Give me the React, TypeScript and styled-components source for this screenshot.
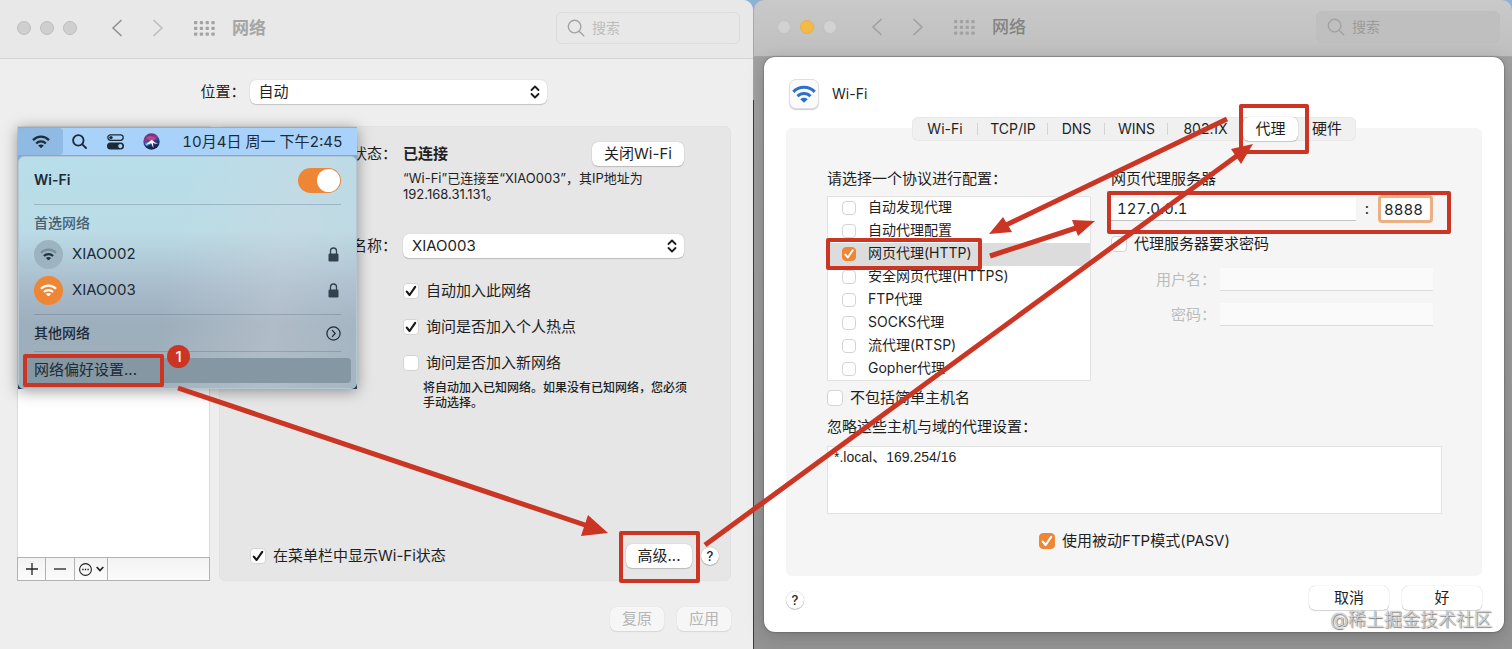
import React, { useId } from "react";
import styled, { createGlobalStyle, css } from "styled-components";

const RED = "#cb3523";
const ORANGE = "#ee8636";

const GlobalStyle = createGlobalStyle`
  *, *::before, *::after { box-sizing: border-box; }
  body {
    margin: 0;
    color: #1f1f1f;
    font-family: Inter, "Noto Sans CJK SC", sans-serif;
    font-size: 15px;
    line-height: 24px;
  }
  button, input, select, textarea { font: inherit; color: inherit; margin: 0; }
`;

/* ---------- shared parts ---------- */

const Desktop = styled.main`
  position: relative;
  display: grid;
  grid-template-columns: minmax(0, 753fr) minmax(0, 758fr);
  column-gap: 1px;
  min-height: 100vh;
  overflow: hidden;
  background: linear-gradient(#8db2d8 0, #8fa6bd 100px, #3b3b3b 100px);
`;

const Window = styled.section<{ $dim?: boolean }>`
  display: flex;
  flex-direction: column;
  position: relative;
  border-radius: ${(p) => (p.$dim ? "10px 10px 0 0" : "0 10px 0 0")};
  background: ${(p) => (p.$dim ? "linear-gradient(#a2a2a2, #939393)" : "#eeeeee")};
`;

const Toolbar = styled.header<{ $dim?: boolean }>`
  display: flex;
  align-items: center;
  height: ${(p) => (p.$dim ? 57 : 59)}px;
  padding: ${(p) => (p.$dim ? "0 12px 2px 23px" : "0 13px 2px 17px")};
  border-bottom: 1px solid ${(p) => (p.$dim ? "#a6a6a6" : "#d2d2d2")};
  border-radius: inherit;
  background: ${(p) => (p.$dim ? "linear-gradient(#c9c9c9, #bfbfbf)" : "#e8e8e8")};
  color: ${(p) => (p.$dim ? "#a2a2a2" : "#a3a3a3")};
`;

const Lights = styled.div`
  display: flex;
  gap: 9px;
`;

const Light = styled.button<{ $fill: string; $edge: string }>`
  width: 14px;
  height: 14px;
  padding: 0;
  border: 1px solid ${(p) => p.$edge};
  border-radius: 50%;
  background: ${(p) => p.$fill};
`;

const NavGroup = styled.nav`
  display: flex;
  align-items: center;
  gap: 31px;
  margin-left: 35px;
`;

const IconButton = styled.button`
  display: flex;
  padding: 0;
  border: 0;
  background: none;
`;

const Title = styled.h1<{ $dim?: boolean }>`
  margin: 0 auto 0 17px;
  color: ${(p) => (p.$dim ? "#838383" : "#a5a5a5")};
  font-size: 17px;
  font-weight: ${(p) => (p.$dim ? 500 : 600)};
`;

const Search = styled.label<{ $dim?: boolean }>`
  display: flex;
  align-items: center;
  gap: 7px;
  width: 184px;
  height: 32px;
  padding: 0 10px;
  border: 1px solid ${(p) => (p.$dim ? "#bebebe" : "#dcdcdc")};
  border-radius: 6px;
  background: ${(p) => (p.$dim ? "#bfbfbf" : "#e8e8e8")};
  input {
    flex: 1;
    min-width: 0;
    padding: 0;
    border: 0;
    outline: 0;
    background: none;
    font-size: 14px;
  }
  input::placeholder {
    color: ${(p) => (p.$dim ? "#9b9b9b" : "#bdbdbd")};
    opacity: 1;
  }
`;

const PushButton = styled.button<{ $width: number }>`
  width: ${(p) => p.$width}px;
  height: 24px;
  padding: 0;
  border: 0;
  border-radius: 6px;
  background: #fff;
  box-shadow: 0 0 1px rgba(0, 0, 0, 0.3), 0 1px 1px rgba(0, 0, 0, 0.16);
  line-height: 24px;
  white-space: nowrap;
  &:disabled {
    background: #f6f6f6;
    color: #b5b5b5;
    box-shadow: 0 0 1px rgba(0, 0, 0, 0.16), 0 1px 1px rgba(0, 0, 0, 0.08);
  }
`;

const HelpButton = styled.button`
  width: 18px;
  height: 18px;
  padding: 0;
  border: 0;
  border-radius: 50%;
  background: #fff;
  box-shadow: 0 0 1px rgba(0, 0, 0, 0.35), 0 1px 1px rgba(0, 0, 0, 0.2);
  font-size: 13px;
  font-weight: 500;
  line-height: 18px;
`;

const SelectWrap = styled.span<{ $width?: number }>`
  position: relative;
  display: block;
  width: ${(p) => (p.$width ? p.$width + "px" : "100%")};
  select {
    display: block;
    appearance: none;
    width: 100%;
    height: 24px;
    padding: 0 24px 0 9px;
    border: 0;
    border-radius: 6px;
    background: #fff;
    box-shadow: 0 0 1px rgba(0, 0, 0, 0.25), 0 1px 1px rgba(0, 0, 0, 0.16);
    line-height: 24px;
  }
  svg {
    position: absolute;
    top: 5px;
    right: 7px;
    pointer-events: none;
  }
`;

/* Red outline drawn round the control that a step points to. */
const Mark = styled.span<{ $inset: string }>`
  position: relative;
  display: flex;
  &::after {
    content: "";
    position: absolute;
    inset: ${(p) => p.$inset};
    z-index: 3;
    border: 4px solid ${RED};
    border-radius: 2px;
    pointer-events: none;
  }
`;

const CheckLabel = styled.label<{ $small?: boolean }>`
  display: flex;
  align-items: center;
  gap: ${(p) => (p.$small ? 12 : 7)}px;
  font-size: ${(p) => (p.$small ? 14 : 15)}px;
  line-height: ${(p) => (p.$small ? 20 : 24)}px;
  white-space: nowrap;
`;

const CheckText = styled.span<{ $small?: boolean }>`
  padding-bottom: ${(p) => (p.$small ? 2 : 0)}px;
`;

const CheckBox = styled.span<{ $size: number; $orange?: boolean }>`
  position: relative;
  display: flex;
  flex: none;
  width: ${(p) => p.$size}px;
  height: ${(p) => p.$size}px;
  input {
    appearance: none;
    width: 100%;
    height: 100%;
    border: 1px solid #d4d4d4;
    border-radius: 4px;
    background: #fff;
  }
  svg {
    position: absolute;
    inset: 0;
    width: 100%;
    height: 100%;
    color: #1a1a1a;
    visibility: hidden;
    pointer-events: none;
  }
  input:checked + svg { visibility: visible; }
  ${(p) =>
    p.$orange &&
    css`
      input:checked { background: ${ORANGE}; border-color: ${ORANGE}; }
      svg { color: #fff; }
    `}
`;

/* ---------- icons ---------- */

const WifiIcon = ({ width, faded }: { width: number; faded?: boolean }) => (
  <svg width={width} height={width * 0.75} viewBox="0 0 20 15" fill="none" stroke="currentColor" strokeWidth="2.5">
    <path d="M1.1 5.7C6 .6 14 .6 18.9 5.7" opacity={faded ? 0.3 : 1} />
    <path d="M4.6 9.4C7.6 6.4 12.4 6.4 15.400 9.400" />
    <path d="M10 14.700 6.900 11.800C8.700 10.300 11.300 10.300 13.100 11.800Z" fill="currentColor" stroke="none" />
  </svg>
);

const Chevron = ({ right, color }: { right?: boolean; color: string }) => (
  <svg width="10" height="18" viewBox="0 0 10 18" fill="none" stroke={color} strokeWidth="1.7" strokeLinecap="round" strokeLinejoin="round">
    <path d={right ? "M1 1.5 9 9 1 16.5" : "M9 1.5 1 9l8 7.5"} />
  </svg>
);

const GridIcon = () => (
  <svg width="21" height="15" viewBox="0 0 21 15" fill="currentColor">
    {[0, 5.7, 11.4].map((y) =>
      [0, 5.8, 11.6, 17.4].map((x) => <rect key={x + "-" + y} x={x} y={y} width="3.3" height="3.3" rx="0.8" />)
    )}
  </svg>
);

const Magnifier = ({ size, weight }: { size: number; weight: number }) => (
  <svg width={size} height={size} viewBox="0 0 18 18" fill="none" stroke="currentColor" strokeWidth={weight} strokeLinecap="round">
    <circle cx="7.6" cy="7.6" r="6.3" />
    <path d="M12.4 12.4 16.8 16.8" />
  </svg>
);

const UpDown = () => (
  <svg width="10" height="14" viewBox="0 0 10 14" fill="none" stroke="#1d1d1d" strokeWidth="1.8" strokeLinecap="round" strokeLinejoin="round">
    <path d="M1.5 5 5 1.5 8.5 5M1.5 9 5 12.5 8.5 9" />
  </svg>
);

const ControlCenterIcon = () => (
  <svg width="17" height="16" viewBox="0 0 17 16" fill="none" stroke="currentColor">
    <rect x=".8" y=".8" width="15.4" height="5.6" rx="2.8" strokeWidth="1.3" />
    <circle cx="4" cy="3.6" r="1.7" fill="currentColor" stroke="none" />
    <rect x="0" y="8.6" width="17" height="7" rx="3.5" fill="currentColor" stroke="none" />
    <circle cx="13.3" cy="12.1" r="2.1" fill="#a9d2f9" stroke="none" />
  </svg>
);

const SiriIcon = () => {
  const id = useId();
  return (
    <svg width="17" height="17" viewBox="0 0 17 17">
      <defs>
        <linearGradient id={id} x1="0" y1="0" x2="0.3" y2="1">
          <stop offset="0" stopColor="#5b2f74" />
          <stop offset="0.45" stopColor="#8c3a86" />
          <stop offset="0.6" stopColor="#2a3f8c" />
          <stop offset="1" stopColor="#14204a" />
        </linearGradient>
      </defs>
      <circle cx="8.5" cy="8.5" r="8.2" fill={`url(#${id})`} />
      <path d="M3 5C6 2 10 2.500 13 6L9 8.500Z" fill="#d0468e" opacity=".8" />
      <path d="M1.500 10C4 8.500 6 9 8.500 7L10 11C7 11 5 13 3 13Z" fill="#3a9bd9" opacity=".8" />
      <path d="M2 11.500C5.500 10.500 7 7.500 9 7 10.500 8 12 10 15.200 11 12 11 11 10.500 9.800 9.800 10.200 11.500 10.500 13.500 10.200 15 9.500 13 8.800 11.500 8.200 10 6.500 11 4.500 11.800 2 11.500Z" fill="#fff" />
    </svg>
  );
};

const LockIcon = () => (
  <svg width="11" height="15" viewBox="0 0 11 15" fill="none">
    <path d="M2.500 7V4a3 3 0 0 1 6 0v3" stroke="currentColor" strokeWidth="1.300" />
    <rect x=".5" y="6.500" width="10" height="8" rx="1.300" fill="currentColor" />
  </svg>
);

const CircleChevron = () => (
  <svg width="15" height="15" viewBox="0 0 15 15" fill="none" stroke="currentColor" strokeWidth="1.200" strokeLinecap="round">
    <circle cx="7.500" cy="7.500" r="6.600" />
    <path d="M6.300 4.400 9.200 7.500l-2.900 3.100" />
  </svg>
);

function Check({ label, checked, orange, small }: { label: string; checked?: boolean; orange?: boolean; small?: boolean }) {
  return (
    <CheckLabel $small={small}>
      <CheckBox $size={small ? 14 : 16} $orange={orange}>
        <input type="checkbox" defaultChecked={checked} />
        <svg viewBox="0 0 16 16" fill="none" stroke="currentColor" strokeWidth="2.200" strokeLinecap="round" strokeLinejoin="round">
          <path d="M3.800 8.600 6.600 12 12.200 3.800" />
        </svg>
      </CheckBox>
      <CheckText $small={small}>{label}</CheckText>
    </CheckLabel>
  );
}

function WindowToolbar({ dim }: { dim?: boolean }) {
  const grey = dim ? { fill: "#d2d2d2", edge: "#c2c2c2" } : { fill: "#cfcfcf", edge: "#bdbdbd" };
  return (
    <Toolbar $dim={dim}>
      <Lights>
        <Light aria-label="关闭" $fill={grey.fill} $edge={grey.edge} />
        <Light aria-label="最小化" $fill={dim ? "#f3bb45" : grey.fill} $edge={dim ? "#e5b04a" : grey.edge} />
        <Light aria-label="缩放" $fill={grey.fill} $edge={grey.edge} />
      </Lights>
      <NavGroup>
        <IconButton aria-label="后退"><Chevron color={dim ? "#a0a0a0" : "#929292"} /></IconButton>
        <IconButton aria-label="前进"><Chevron right color={dim ? "#a0a0a0" : "#bdbdbd"} /></IconButton>
        <IconButton aria-label="显示全部"><GridIcon /></IconButton>
      </NavGroup>
      <Title $dim={dim}>网络</Title>
      <Search $dim={dim}>
        <Magnifier size={18} weight={1.4} />
        <input type="search" aria-label="搜索" placeholder="搜索" />
      </Search>
    </Toolbar>
  );
}

/* ---------- network window ---------- */

const LocationRow = styled.label`
  display: flex;
  justify-content: center;
  gap: 4px;
  margin: 21px 0 22px;
  padding-right: 6px;
`;

const NetworkBody = styled.div`
  display: flex;
  flex: 1;
  gap: 9px;
  padding: 0 22px 0 17px;
`;

const ServiceColumn = styled.aside`
  display: flex;
  flex-direction: column;
  width: 193px;
`;

const ServiceList = styled.div`
  flex: 1;
  border: 1px solid #dadada;
  border-bottom: 0;
  background: #fff;
`;

const ServiceActions = styled.div`
  display: flex;
  height: 24px;
  border: 1px solid #b2b2b2;
  background: linear-gradient(#f3f3f3, #fbfbfb);
`;

const ServiceAction = styled.button<{ $width: number }>`
  display: flex;
  align-items: center;
  justify-content: center;
  gap: 4px;
  width: ${(p) => p.$width}px;
  padding: 0;
  border: 0;
  border-right: 1px solid #b2b2b2;
  background: none;
`;

const StatusPanel = styled.div`
  display: flex;
  flex: 1;
  flex-direction: column;
  min-width: 0;
  padding: 15px 11px 12px 0;
  border: 1px solid #e2e2e2;
  border-radius: 6px;
  background: #e6e6e6;
`;

const StatusGrid = styled.div`
  display: grid;
  grid-template-columns: 177px minmax(0, 1fr);
  column-gap: 6px;
  padding-right: 35px;
`;

const FieldLabel = styled.label`
  text-align: right;
`;

const StatusValue = styled.div`
  display: flex;
  justify-content: space-between;
  font-weight: 600;
  ${PushButton} { font-weight: 400; }
`;

const Detail = styled.p`
  grid-column: 2;
  margin: 4px 0 32px;
  font-size: 13px;
  line-height: 16px;
`;

const Options = styled.div`
  display: flex;
  flex-direction: column;
  grid-column: 2;
  gap: 12px;
  margin-top: 21px;
`;

const Hint = styled.p`
  grid-column: 2;
  margin: 5px 0 0;
  padding-left: 20px;
  font-size: 12px;
  font-weight: 500;
  line-height: 15px;
  white-space: nowrap;
`;

const StatusFooter = styled.div`
  display: flex;
  align-items: center;
  gap: 9px;
  margin-top: auto;
  padding-left: 30px;
  > ${Mark} { margin-left: auto; }
`;

const WindowFooter = styled.footer`
  display: flex;
  justify-content: flex-end;
  gap: 13px;
  padding: 26px 22px 18px;
`;

/* ---------- menu bar pop-over ---------- */

const Popover = styled.aside`
  position: absolute;
  top: 127px;
  left: 18px;
  width: 339px;
  background: linear-gradient(#7fa9d4 50px, #234258 50px);
  box-shadow: 0 2px 14px rgba(0, 0, 0, 0.4);
  color: #1c2b37;
`;

const MenuBar = styled.div`
  display: flex;
  align-items: center;
  height: 28px;
  margin-bottom: 1px;
  background: #a9d2fa;
  border-top: 1px solid #8aaed4;
`;

const MenuItem = styled.button<{ $active?: boolean; $width: number }>`
  display: flex;
  align-items: center;
  justify-content: center;
  width: ${(p) => p.$width}px;
  height: 100%;
  padding: 0;
  border: 0;
  border-radius: 0 4px 4px 0;
  background: ${(p) => (p.$active ? "#8ebae3" : "none")};
`;

const Clock = styled.time`
  margin: 0 auto;
  font-variant-numeric: tabular-nums;
  white-space: nowrap;
`;

const Menu = styled.div`
  padding: 11px 5px 5px;
  border: 1px solid #b4c8d4;
  border-radius: 6px;
  background:
    linear-gradient(100deg, rgba(255, 255, 255, 0) 45%, rgba(210, 214, 222, 0.35) 75%, rgba(190, 205, 215, 0.2)),
    linear-gradient(#b7deea 0, #bbdce6 32%, #a9bccc 56%, #9daebc 72%, #a0b0bb 100%);
`;

const MenuRow = styled.div<{ $height: number; $weight?: number }>`
  display: flex;
  align-items: center;
  gap: 9px;
  height: ${(p) => p.$height}px;
  padding: 0 10px;
  ${(p) => p.$weight && css`font-size: 14px; font-weight: ${p.$weight};`}
  > :last-child { margin-left: auto; }
`;

const MenuHeading = styled.h2`
  margin: 0;
  padding: 0 10px;
  color: #466070;
  font-size: 14px;
  font-weight: 500;
  line-height: 26px;
`;

const Divider = styled.hr<{ $space: string }>`
  height: 1px;
  margin: ${(p) => p.$space};
  border: 0;
  background: rgba(70, 95, 115, 0.28);
`;

const Toggle = styled.input`
  appearance: none;
  display: flex;
  justify-content: flex-end;
  width: 43px;
  height: 25px;
  padding: 1px;
  border-radius: 13px;
  background: ${ORANGE};
  &::before {
    content: "";
    width: 23px;
    height: 23px;
    border-radius: 50%;
    background: #fff;
  }
  &:not(:checked) { justify-content: flex-start; background: #9fb0bb; }
`;

const NetworkBadge = styled.span<{ $on?: boolean }>`
  display: flex;
  align-items: center;
  justify-content: center;
  width: 29px;
  height: 29px;
  border-radius: 50%;
  background: ${(p) => (p.$on ? ORANGE : "#9db4c0")};
  color: ${(p) => (p.$on ? "#fff" : "#1f3442")};
`;

const LockSlot = styled.span`
  display: flex;
  padding-right: 2px;
  color: #33434e;
`;

const PreferencesRow = styled.button`
  display: flex;
  width: 100%;
  height: 25px;
  padding: 0 10px;
  border: 0;
  border-radius: 4px;
  background: #8597a3;
`;

const StepBadge = styled.span`
  position: absolute;
  top: 218px;
  left: 149px;
  z-index: 4;
  width: 23px;
  height: 23px;
  border-radius: 50%;
  background: ${RED};
  color: #fff;
  font-weight: 500;
  line-height: 23px;
  text-align: center;
`;

/* ---------- proxy sheet ---------- */

const Sheet = styled.div`
  flex: 1;
  margin: 0 8px 17px 10px;
  padding: 22px 22px 0;
  border-radius: 11px;
  background: #fff;
  box-shadow: 0 0 2px rgba(0, 0, 0, 0.5), 0 4px 18px rgba(0, 0, 0, 0.18);
`;

const SheetHeader = styled.div`
  display: flex;
  align-items: center;
  gap: 13px;
  padding-left: 3px;
`;

const AppTile = styled.span`
  display: flex;
  align-items: center;
  justify-content: center;
  width: 30px;
  height: 30px;
  border: 1px solid #dedede;
  border-radius: 7px;
  background: #fbfbfb;
  box-shadow: 0 1px 1px rgba(0, 0, 0, 0.2);
  color: #2c70cf;
`;

const SheetTitle = styled.span`
  font-size: 14px;
`;

const TabBar = styled.div`
  position: relative;
  display: flex;
  width: 444px;
  height: 24px;
  margin: 8px auto 0;
  border-radius: 6px;
  background: #f0f0f0;
  box-shadow: inset 0 0 0 1px #e8e8e8;
`;

const Tab = styled.button<{ $width: number; $line?: boolean; $selected?: boolean; $cjk?: boolean }>`
  position: relative;
  width: ${(p) => p.$width}px;
  height: 24px;
  padding: 0;
  border: 0;
  border-radius: 6px;
  background: ${(p) => (p.$selected ? "#fff" : "none")};
  box-shadow: ${(p) => (p.$selected ? "0 0 1px rgba(0,0,0,.4), 0 1px 1px rgba(0,0,0,.15)" : "none")};
  font-size: ${(p) => (p.$cjk ? 15 : 14)}px;
  line-height: 24px;
  ${(p) =>
    p.$line &&
    css`
      &::after {
        content: "";
        position: absolute;
        top: 6px;
        right: 0;
        width: 1px;
        height: 12px;
        background: #d4d4d4;
      }
    `}
`;

const ProxyPanel = styled.div`
  margin-top: -13px;
  padding: 39px 40px 23px 41px;
  border-radius: 6px;
  background: #f5f5f5;
`;

const ProxyColumns = styled.div`
  display: grid;
  grid-template-columns: minmax(0, 264fr) minmax(0, 331fr);
  column-gap: 20px;
  margin-bottom: 5px;
`;

const SectionTitle = styled.h2<{ $gap: number }>`
  margin: 0 0 ${(p) => p.$gap}px;
  font-size: 15px;
  font-weight: 400;
`;

const ProtocolList = styled.ul`
  display: grid;
  grid-auto-rows: minmax(0, 1fr);
  height: 185px;
  margin: 0;
  padding: 0;
  border: 1px solid #e2e2e2;
  background: #fff;
  list-style: none;
`;

const Protocol = styled.li<{ $selected?: boolean }>`
  display: flex;
  align-items: center;
  padding-left: 14px;
  background: ${(p) => (p.$selected ? "#dcdcdc" : "none")};
`;

const ServerRow = styled(Mark)`
  align-items: center;
  height: 28px;
  margin-bottom: 9px;
  padding-right: 9px;
`;

const HostInput = styled.input`
  flex: 1;
  min-width: 0;
  height: 23px;
  padding: 0 6px;
  border: 0;
  border-bottom: 1px solid #c4c4c4;
  background: #fff;
  font-variant-numeric: tabular-nums;
`;

const Colon = styled.span`
  width: 22px;
  text-align: center;
`;

const PortInput = styled.input`
  width: 55px;
  height: 28px;
  padding: 0 0 0 3px;
  border: 3px solid #eab084;
  border-radius: 4px;
  outline: 0;
  background: #fff;
  font-variant-numeric: tabular-nums;
`;

const LoginRow = styled.label`
  display: grid;
  grid-template-columns: 105px minmax(0, 1fr);
  column-gap: 4px;
  align-items: center;
  margin-top: 12px;
  padding-right: 9px;
  color: #bcbcbc;
  line-height: 22px;
  text-align: right;
  input {
    width: 100%;
    height: 23px;
    border: 0;
    border-bottom: 1px solid #dcdcdc;
    background: #fafafa;
  }
`;

const HostsArea = styled.textarea`
  display: block;
  width: 100%;
  height: 68px;
  margin-bottom: 15px;
  padding: 0 6px;
  border: 1px solid #e2e2e2;
  outline: 0;
  background: #fff;
  font-family: "Liberation Sans", "Noto Sans CJK SC", sans-serif;
  font-size: 14px;
  line-height: 20px;
  resize: none;
`;

const HostsTitle = styled.label`
  display: block;
  margin: 5px 0 7px;
`;

const Centered = styled.div`
  display: flex;
  justify-content: center;
`;

const SheetFooter = styled.div`
  display: flex;
  align-items: center;
  gap: 13px;
  padding: 10px 0 22px;
  ${HelpButton} { margin: 4px auto 0 0; }
`;

/* ---------- annotations ---------- */

const Arrows = styled.svg`
  position: absolute;
  inset: 0;
  z-index: 5;
  width: 100%;
  height: 100%;
  pointer-events: none;
`;

const Watermark = styled.span`
  position: absolute;
  right: 20px;
  bottom: 16px;
  z-index: 6;
  color: rgba(255, 255, 255, 0.75);
  font-size: 18px;
  font-weight: 300;
  line-height: 26px;
  text-shadow: 0 0 1px #555, 1px 1px 1px #777;
`;

const TABS = [
  { name: "Wi-Fi", width: 66, line: true },
  { name: "TCP/IP", width: 70, line: true },
  { name: "DNS", width: 57, line: true },
  { name: "WINS", width: 63, line: true },
  { name: "802.1X", width: 75 },
  { name: "代理", width: 55, selected: true, cjk: true },
  { name: "硬件", width: 58, cjk: true },
];

const PROTOCOLS = [
  "自动发现代理",
  "自动代理配置",
  "网页代理(HTTP)",
  "安全网页代理(HTTPS)",
  "FTP代理",
  "SOCKS代理",
  "流代理(RTSP)",
  "Gopher代理",
];

const ARROWS = [
  { line: "M178 388 588 526", head: "608,533 588,515 581,536" },
  { line: "M705 545 1238 155", head: "1253,144 1231,149 1241,164" },
  { line: "M1227 119 1006 225", head: "989,234 1003,217 1012,232" },
  { line: "M990 256 1076 228", head: "1095,221 1072,220 1078,236" },
];

function WifiMenu() {
  return (
    <Popover>
      <MenuBar>
        <MenuItem $active $width={45} aria-label="Wi-Fi"><WifiIcon width={18} /></MenuItem>
        <MenuItem $width={33} aria-label="聚焦搜索"><Magnifier size={15} weight={2.2} /></MenuItem>
        <MenuItem $width={39} aria-label="控制中心"><ControlCenterIcon /></MenuItem>
        <MenuItem $width={33} aria-label="Siri"><SiriIcon /></MenuItem>
        <Clock>10月4日 周一 下午2:45</Clock>
      </MenuBar>
      <Menu>
        <MenuRow as="label" $height={24} $weight={600}>
          <span>Wi-Fi</span>
          <Toggle type="checkbox" defaultChecked />
        </MenuRow>
        <Divider $space="12px 10px 5px" />
        <MenuHeading>首选网络</MenuHeading>
        <MenuRow $height={36}>
          <NetworkBadge><WifiIcon width={17} faded /></NetworkBadge>
          <span>XIAO002</span>
          <LockSlot><LockIcon /></LockSlot>
        </MenuRow>
        <MenuRow $height={36}>
          <NetworkBadge $on><WifiIcon width={17} /></NetworkBadge>
          <span>XIAO003</span>
          <LockSlot><LockIcon /></LockSlot>
        </MenuRow>
        <Divider $space="6px 10px 5px" />
        <MenuRow $height={26} $weight={500}>
          <span>其他网络</span>
          <CircleChevron />
        </MenuRow>
        <Divider $space="5px 10px 6px" />
        <PreferencesRow>
          <Mark $inset="-4px -27px -4px -11px">网络偏好设置...</Mark>
        </PreferencesRow>
      </Menu>
      <StepBadge>1</StepBadge>
    </Popover>
  );
}

function NetworkWindow() {
  return (
    <Window>
      <WindowToolbar />
      <LocationRow>
        <span>位置：</span>
        <SelectWrap $width={297}>
          <select><option>自动</option></select>
          <UpDown />
        </SelectWrap>
      </LocationRow>
      <NetworkBody>
        <ServiceColumn>
          <ServiceList />
          <ServiceActions>
            <ServiceAction $width={28} aria-label="添加">
              <svg width="12" height="12" viewBox="0 0 12 12" stroke="#222" strokeWidth="1.3"><path d="M0 6h12M6 0v12" /></svg>
            </ServiceAction>
            <ServiceAction $width={29} aria-label="移除">
              <svg width="12" height="12" viewBox="0 0 12 12" stroke="#222" strokeWidth="1.3"><path d="M0 6h12" /></svg>
            </ServiceAction>
            <ServiceAction $width={33} aria-label="更多">
              <svg width="13" height="13" viewBox="0 0 13 13" fill="none" stroke="#222" strokeWidth="1.1">
                <circle cx="6.5" cy="6.5" r="5.9" />
                <path d="M3.2 6.5h1.400M5.800 6.500h1.400M8.400 6.500h1.400" strokeWidth="1.5" />
              </svg>
              <svg width="8" height="6" viewBox="0 0 8 6" fill="none" stroke="#222" strokeWidth="1.700"><path d="M.7 1 4 4.500 7.300 1" /></svg>
            </ServiceAction>
          </ServiceActions>
        </ServiceColumn>
        <StatusPanel>
          <StatusGrid>
            <FieldLabel as="span">状态：</FieldLabel>
            <StatusValue>
              已连接
              <PushButton $width={92}>关闭Wi-Fi</PushButton>
            </StatusValue>
            <Detail>
              “Wi-Fi”已连接至“XIAO003”，其IP地址为
              <br />
              192.168.31.131。
            </Detail>
            <FieldLabel htmlFor="network-name">网络名称：</FieldLabel>
            <SelectWrap>
              <select id="network-name"><option>XIAO003</option></select>
              <UpDown />
            </SelectWrap>
            <Options>
              <Check label="自动加入此网络" checked />
              <Check label="询问是否加入个人热点" checked />
              <Check label="询问是否加入新网络" />
            </Options>
            <Hint>
              将自动加入已知网络。如果没有已知网络，您必须
              <br />
              手动选择。
            </Hint>
          </StatusGrid>
          <StatusFooter>
            <Check label="在菜单栏中显示Wi-Fi状态" checked />
            <Mark $inset="-13px -8px -15px -7px">
              <PushButton $width={66}>高级...</PushButton>
            </Mark>
            <HelpButton aria-label="帮助">?</HelpButton>
          </StatusFooter>
        </StatusPanel>
      </NetworkBody>
      <WindowFooter>
        <PushButton $width={54} disabled>复原</PushButton>
        <PushButton $width={54} disabled>应用</PushButton>
      </WindowFooter>
      <WifiMenu />
    </Window>
  );
}

function ProxyWindow() {
  return (
    <Window $dim>
      <WindowToolbar dim />
      <Sheet>
        <SheetHeader>
          <AppTile><WifiIcon width={24} /></AppTile>
          <SheetTitle>Wi-Fi</SheetTitle>
        </SheetHeader>
        <TabBar role="tablist">
          {TABS.map((t) => {
            const tab = (
              <Tab key={t.name} role="tab" aria-selected={!!t.selected} $width={t.width} $line={t.line} $selected={t.selected} $cjk={t.cjk}>
                {t.name}
              </Tab>
            );
            return t.selected ? <Mark key={t.name} $inset="-13px -11px -13px -4px">{tab}</Mark> : tab;
          })}
        </TabBar>
        <ProxyPanel>
          <ProxyColumns>
            <div>
              <SectionTitle $gap={5}>请选择一个协议进行配置：</SectionTitle>
              <ProtocolList>
                {PROTOCOLS.map((name, i) => (
                  <Protocol key={name} $selected={i === 2}>
                    {i === 2 ? (
                      <Mark $inset="-5px -10px -5px -16px"><Check small orange checked label={name} /></Mark>
                    ) : (
                      <Check small orange label={name} />
                    )}
                  </Protocol>
                ))}
              </ProtocolList>
            </div>
            <div>
              <SectionTitle $gap={4}>网页代理服务器</SectionTitle>
              <ServerRow $inset="-4px -9px -11px -4px">
                <HostInput aria-label="代理服务器" defaultValue="127.0.0.1" />
                <Colon>:</Colon>
                <PortInput aria-label="端口" defaultValue="8888" />
              </ServerRow>
              <Check orange label="代理服务器要求密码" />
              <LoginRow>用户名：<input type="text" disabled /></LoginRow>
              <LoginRow>密码：<input type="password" disabled /></LoginRow>
            </div>
          </ProxyColumns>
          <Check orange label="不包括简单主机名" />
          <HostsTitle htmlFor="bypass-hosts">忽略这些主机与域的代理设置：</HostsTitle>
          <HostsArea id="bypass-hosts" defaultValue="*.local、169.254/16" />
          <Centered><Check orange checked label="使用被动FTP模式(PASV)" /></Centered>
        </ProxyPanel>
        <SheetFooter>
          <HelpButton aria-label="帮助">?</HelpButton>
          <PushButton $width={80}>取消</PushButton>
          <PushButton $width={80}>好</PushButton>
        </SheetFooter>
      </Sheet>
    </Window>
  );
}

export default function App() {
  return (
    <>
      <GlobalStyle />
      <Desktop>
        <NetworkWindow />
        <ProxyWindow />
        <Arrows viewBox="0 0 1512 649" preserveAspectRatio="none" aria-hidden="true">
          {ARROWS.map((a) => (
            <g key={a.line}>
              <path d={a.line} stroke={RED} strokeWidth="5" />
              <polygon points={a.head} fill={RED} />
            </g>
          ))}
        </Arrows>
        <Watermark>@稀土掘金技术社区</Watermark>
      </Desktop>
    </>
  );
}
